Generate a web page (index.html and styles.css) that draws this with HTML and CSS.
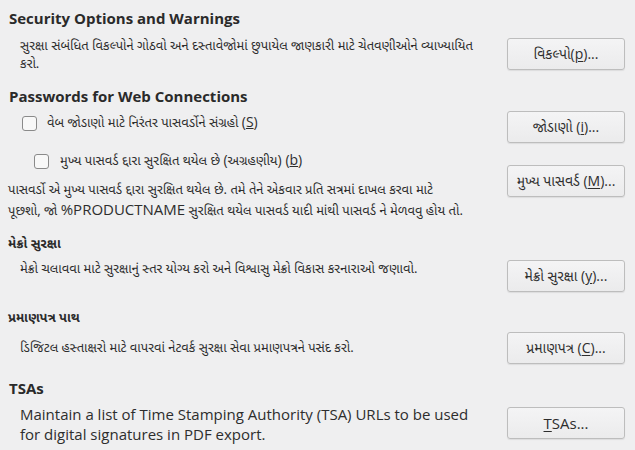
FILE: index.html
```html
<!DOCTYPE html>
<html lang="gu">
<head>
<meta charset="utf-8">
<title>Security</title>
<link rel="stylesheet" href="styles.css">
</head>
<body>
<div class="page">
  <h2 class="title t1">Security Options and Warnings</h2>
  <div class="row r1">
    <p class="desc">સુરક્ષા સંબંધિત વિકલ્પોને ગોઠવો અને દસ્તાવેજોમાં છુપાયેલ જાણકારી માટે ચેતવણીઓને વ્યાખ્યાયિત કરો.</p>
    <button class="btn">વિકલ્પો(<u>p</u>)...</button>
  </div>

  <h2 class="title t2">Passwords for Web Connections</h2>
  <div class="row r2">
    <label class="check c1"><span class="box"></span><span>વેબ જોડાણો માટે નિરંતર પાસવર્ડોને સંગ્રહો <span class="lat">(<u>S</u>)</span></span></label>
    <button class="btn">જોડાણો (<u>i</u>)...</button>
  </div>
  <div class="row r3">
    <div class="col">
      <label class="check c2"><span class="box"></span><span>મુખ્ય પાસવર્ડ દ્દારા સુરક્ષિત થયેલ છે <span class="lat">(</span>અગ્રહણીય<span class="lat">) (<u>b</u>)</span></span></label>
      <p class="para"><span>પાસવર્ડો એ મુખ્ય પાસવર્ડ દ્દારા સુરક્ષિત થયેલ છે. તમે તેને એકવાર પ્રતિ સત્રમાં દાખલ કરવા માટે</span> <span>પૂછશો, જો</span> <span class="lat">%PRODUCTNAME</span> <span>સુરક્ષિત થયેલ પાસવર્ડ યાદી માંથી પાસવર્ડ ને મેળવવુ હોય તો.</span></p>
    </div>
    <button class="btn bm">મુખ્ય પાસવર્ડ (<u>M</u>)...</button>
  </div>

  <h3 class="sub h-macro">મેક્રો સુરક્ષા</h3>
  <div class="row r4">
    <p class="desc one">મેક્રો ચલાવવા માટે સુરક્ષાનું સ્તર યોગ્ય કરો અને વિશ્વાસુ મેક્રો વિકાસ કરનારાઓ જણાવો.</p>
    <button class="btn">મેક્રો સુરક્ષા (<u>y</u>)...</button>
  </div>

  <h3 class="sub h-cert">પ્રમાણપત્ર પાથ</h3>
  <div class="row r5">
    <p class="desc one2">ડિજિટલ હસ્તાક્ષરો માટે વાપરવાં નેટવર્ક સુરક્ષા સેવા પ્રમાણપત્રને પસંદ કરો.</p>
    <button class="btn">પ્રમાણપત્ર (<u>C</u>)...</button>
  </div>

  <h2 class="title t3">TSAs</h2>
  <div class="row r6">
    <p class="latin">Maintain a list of Time Stamping Authority (TSA) URLs to be used for digital signatures in PDF export.</p>
    <button class="btn bt"><u>T</u>SAs...</button>
  </div>
</div>
</body>
</html>
```

FILE: styles.css
```css
html, body {
  margin: 0;
  padding: 0;
  background: #efeff0;
}
body {
  width: 635px;
  height: 450px;
  overflow: hidden;
  font-family: "Lohit Gujarati", "Noto Sans Gujarati", "Open Sans", sans-serif;
  color: #2d2d2d;
}
.page {
  padding: 8px 10px 0 8px;
  display: flex;
  flex-direction: column;
}
.title {
  margin: 0;
  font-family: "Open Sans", sans-serif;
  font-weight: 700;
  font-size: 15px;
  line-height: 20px;
  color: #2a2a2a;
  padding-left: 1px;
}
.t2 { margin-top: 12px; }
.t3 { margin-top: 14px; }
.row {
  display: flex;
  justify-content: space-between;
  align-items: flex-start;
}
.btn {
  flex: 0 0 auto;
  width: 118px;
  height: 32px;
  border: 1px solid #bdbdbd;
  border-radius: 3px;
  background: linear-gradient(#f4f4f5, #ebebec);
  box-shadow: 0 1px 1px rgba(0,0,0,0.08);
  font-family: "Open Sans", "Lohit Gujarati", "Noto Sans Gujarati", sans-serif;
  font-size: 14px;
  color: #2d2d2d;
  padding: 0;
  margin: 0;
}
.btn u { text-underline-offset: 2px; }
.lat {
  font-family: "Open Sans", sans-serif;
  font-size: 14px;
  line-height: 18px;
}
.desc {
  margin: 0;
  padding-left: 12px;
  width: 458px;
  font-size: 13px;
  line-height: 18px;
}
.r1 { margin-top: 10px; }
.r2 { margin-top: 5px; }
.check {
  display: flex;
  align-items: center;
  font-size: 13px;
  line-height: 18px;
}
.box {
  width: 13px;
  height: 13px;
  border: 1px solid #8a8a8a;
  border-radius: 3px;
  background: #f8f8f8;
  flex: 0 0 auto;
}
.c1 { margin-top: 2px; padding-left: 14px; gap: 10px; }
.c2 { margin-top: 8px; padding-left: 26px; gap: 11px; }
.col { display: flex; flex-direction: column; }
.para {
  margin: 9px 0 0 0;
  font-size: 13px;
  line-height: 21px;
  width: 455px;
}
.para .lat { font-size: 15px; line-height: 0; }
.bm { margin-top: 22px; }
.sub {
  margin: 14px 0 0 0;
  font-size: 13px;
  line-height: 18px;
  font-weight: 700;
  color: #2a2a2a;
}
.r4 { margin-top: 6px; }
.one { padding-top: 1px; }
.h-cert { margin-top: 18px; }
.r5 { margin-top: 4px; }
.one2 { padding-top: 8px; }
.r6 { margin-top: 6px; }
.latin {
  margin: 0;
  padding-left: 12px;
  font-family: "Open Sans", sans-serif;
  font-size: 15px;
  line-height: 20px;
  width: 470px;
}
.bt { margin-top: 3px; font-size: 15px; }
```
